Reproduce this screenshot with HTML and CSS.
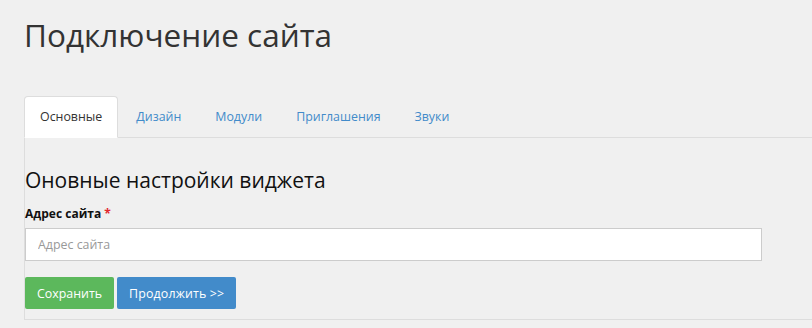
FILE: index.html
```html
<!DOCTYPE html>
<html lang="ru">
<head>
  <meta charset="UTF-8" />
  <title>Подключение сайта</title>
  <link rel="stylesheet" href="styles.css">
</head>
<body>
  <div class="page">
    <h1 class="page-title">Подключение сайта</h1>

    <ul class="nav-tabs">
      <li class="tab active"><a href="#">Основные</a></li>
      <li class="tab"><a href="#">Дизайн</a></li>
      <li class="tab"><a href="#">Модули</a></li>
      <li class="tab"><a href="#">Приглашения</a></li>
      <li class="tab"><a href="#">Звуки</a></li>
    </ul>

    <div class="tab-content">
      <h3 class="section-title">Оновные настройки виджета</h3>
      <form class="form">
        <label class="field-label" for="siteUrl">Адрес сайта <span class="required">*</span></label>
        <input class="field-input" id="siteUrl" type="text" placeholder="Адрес сайта" />
        <div class="actions">
          <button type="button" class="btn btn-success">Сохранить</button>
          <button type="button" class="btn btn-primary">Продолжить &gt;&gt;</button>
        </div>
      </form>
    </div>
  </div>
</body>
</html>
```
FILE: styles.css
```css
html, body {
  margin: 0;
  padding: 0;
  background: #f0f0f0;
  font-family: 'Open Sans', 'Noto Sans', sans-serif;
  color: #333;
}
.page {
  padding: 0 0 0 24px;
}
.page-title {
  margin: 0;
  padding-top: 13px;
  font-size: 31.5px;
  font-weight: 400;
  line-height: 44px;
  color: #333;
}
.nav-tabs {
  list-style: none;
  margin: 39px 0 0;
  padding: 0;
  display: flex;
  border-bottom: 1px solid #ddd;
}
.tab {
  margin-right: 2px;
  margin-bottom: -1px;
}
.tab a {
  display: block;
  padding: 10px 15px;
  line-height: 20px;
  font-size: 12.4px;
  color: #428bca;
  text-decoration: none;
  border: 1px solid transparent;
  border-radius: 4px 4px 0 0;
}
.tab.active a {
  color: #333;
  background: #fff;
  border-color: #ddd #ddd transparent;
}
.tab-content {
  border-left: 1px solid #ddd;
  border-bottom: 1px solid #ddd;
  padding: 0 0 10px 0;
}
.section-title {
  margin: 0;
  padding-top: 27px;
  font-size: 21px;
  font-weight: 400;
  line-height: 30px;
  color: #111;
}
.form {
  display: flex;
  flex-direction: column;
  align-items: flex-start;
}
.field-label {
  margin-top: 10px;
  font-size: 12px;
  font-weight: 700;
  line-height: 18px;
  color: #111;
}
.required {
  color: #e2272d;
}
.field-input {
  box-sizing: border-box;
  width: 737px;
  height: 33px;
  margin-top: 5px;
  padding: 0 12px;
  border: 1px solid #ccc;
  background: #fff;
  font-family: inherit;
  font-size: 12.4px;
  color: #555;
  outline: none;
}
.field-input::placeholder {
  color: #999;
}
.actions {
  display: flex;
  gap: 3px;
  margin-top: 16px;
}
.btn {
  height: 32px;
  padding: 0 12px;
  border: 0;
  border-radius: 2px;
  font-family: inherit;
  font-size: 12.4px;
  color: #fff;
  cursor: pointer;
}
.btn-success {
  background: #5cb85c;
}
.btn-primary {
  background: #428bca;
  letter-spacing: 0.15px;
}
```
